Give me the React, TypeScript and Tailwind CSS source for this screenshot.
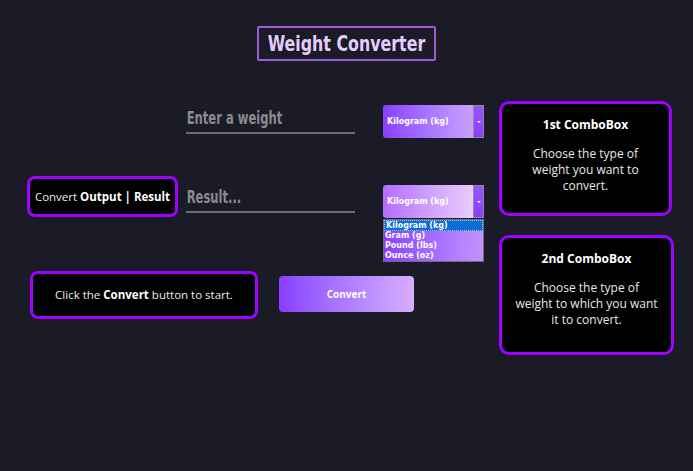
import React from "react";

const NARROW = "font-['DejaVu_Sans','Liberation_Sans',sans-serif]";
const BODY = "font-['Open_Sans','Noto_Sans',sans-serif]";
const COMBO = "font-['DejaVu_Sans','Verdana',sans-serif]";

const OPTIONS = ["Kilogram (kg)", "Gram (g)", "Pound (lbs)", "Ounce (oz)"];

// no condensed face is installed, so the narrow look is a horizontal squeeze
function LineInput({ placeholder }: { placeholder: string }) {
  return (
    <div className="w-[169px] h-[29px] border-b-2 border-[#6c6c7a] flex items-center">
      <span className={`${NARROW} inline-block whitespace-nowrap font-bold text-[17px] text-[#8a8a8f] pl-[1px] origin-left scale-x-[0.68]`}>
        {placeholder}
      </span>
    </div>
  );
}

function Combo({ light, open }: { light?: boolean; open?: boolean }) {
  return (
    <div className="relative w-[101px]">
      <div className="flex h-[33px]">
        <div
          className={`flex-1 flex items-center pl-[4px] rounded-l-[3px] ${
            light
              ? "bg-gradient-to-r from-[#b46cff] to-[#e9cdfd]"
              : "bg-gradient-to-r from-[#8a3cff] to-[#caa0fb]"
          }`}
        >
          <span className={`${COMBO} font-bold text-[8px] text-white`}>Kilogram (kg)</span>
        </div>
        <div className="w-[11px] border border-[#8c8c98] bg-gradient-to-b from-[#9a55ff] to-[#8a3cff] flex items-center justify-center">
          <span className="w-0 h-0 border-l-[2px] border-r-[2px] border-t-[2px] border-l-transparent border-r-transparent border-t-white" />
        </div>
      </div>
      {open && (
        <div className="absolute left-0 top-[34px] w-[101px] h-[43px] bg-gradient-to-r from-[#8a3cff] to-[#c592fd] border border-[#6d6d7a] flex flex-col">
          {OPTIONS.map((o, i) => (
            <div
              key={o}
              className={`${COMBO} font-bold text-[8px] leading-[10px] h-[10.5px] pl-[1px] text-white ${
                i === 0 ? "bg-[#0a6ed3] border border-dotted border-[#9ec6ff] leading-[8.5px]" : ""
              }`}
            >
              {o}
            </div>
          ))}
        </div>
      )}
    </div>
  );
}

function InfoBox({ title, text }: { title: string; text: string }) {
  return (
    <div className={`${BODY} h-full bg-black border-[3px] border-[#a000ff] rounded-[10px] flex flex-col items-center text-center text-white text-[12px] px-[12px]`}>
      <div className="font-bold mt-[12px]">{title}</div>
      <div className="mt-[12px] leading-[16px] text-[#e8e8e8]">{text}</div>
    </div>
  );
}

export default function App() {
  return (
    <div className="w-[693px] h-[471px] bg-[#1b1b27] overflow-hidden">
      <div className="flex justify-center pt-[26px]">
        <div className="w-[179px] h-[35px] border-2 border-[#9a5bd6] rounded-[2px] flex items-center justify-center">
          <span className={`${NARROW} inline-block whitespace-nowrap font-bold text-[22px] text-[#e4cdfd] scale-x-[0.72]`}>
            Weight Converter
          </span>
        </div>
      </div>

      <div className="flex mt-[40px]">
        <div className="w-[499px] flex flex-col">
          <div className="flex items-start mt-[4px] pl-[186px]">
            <LineInput placeholder="Enter a weight" />
            <div className="ml-[28px]">
              <Combo />
            </div>
          </div>

          <div className="flex items-start mt-[38px]">
            <div className={`${BODY} ml-[27px] w-[151px] h-[41px] bg-black border-[3px] border-[#a000ff] rounded-[8px] flex items-center justify-center text-[11.5px] text-[#ececec]`}>
              <span>
                Convert <b className="text-white">Output | Result</b>
              </span>
            </div>
            <div className="ml-[8px] mt-[8px]">
              <LineInput placeholder="Result..." />
            </div>
            <div className="ml-[28px] mt-[9px]">
              <Combo light open />
            </div>
          </div>

          <div className="flex items-start mt-[53px]">
            <div className={`${BODY} ml-[30px] w-[228px] h-[48px] bg-black border-[3px] border-[#a000ff] rounded-[8px] flex items-center justify-center text-[11.5px] text-[#ececec]`}>
              <span>
                Click the <b className="text-white">Convert</b> button to start.
              </span>
            </div>
            <button
              className={`${BODY} ml-[21px] mt-[5px] w-[135px] h-[36px] rounded-[4px] bg-gradient-to-r from-[#8a3cff] to-[#d8adff] text-white font-bold text-[10px]`}
            >
              Convert
            </button>
          </div>
        </div>

        <div className="flex flex-col">
          <div className="w-[173px] h-[115px]">
            <InfoBox title="1st ComboBox" text="Choose the type of weight you want to convert." />
          </div>
          <div className="w-[175px] mt-[19px] h-[120px]">
            <InfoBox title="2nd ComboBox" text="Choose the type of weight to which you want it to convert." />
          </div>
        </div>
      </div>
    </div>
  );
}
